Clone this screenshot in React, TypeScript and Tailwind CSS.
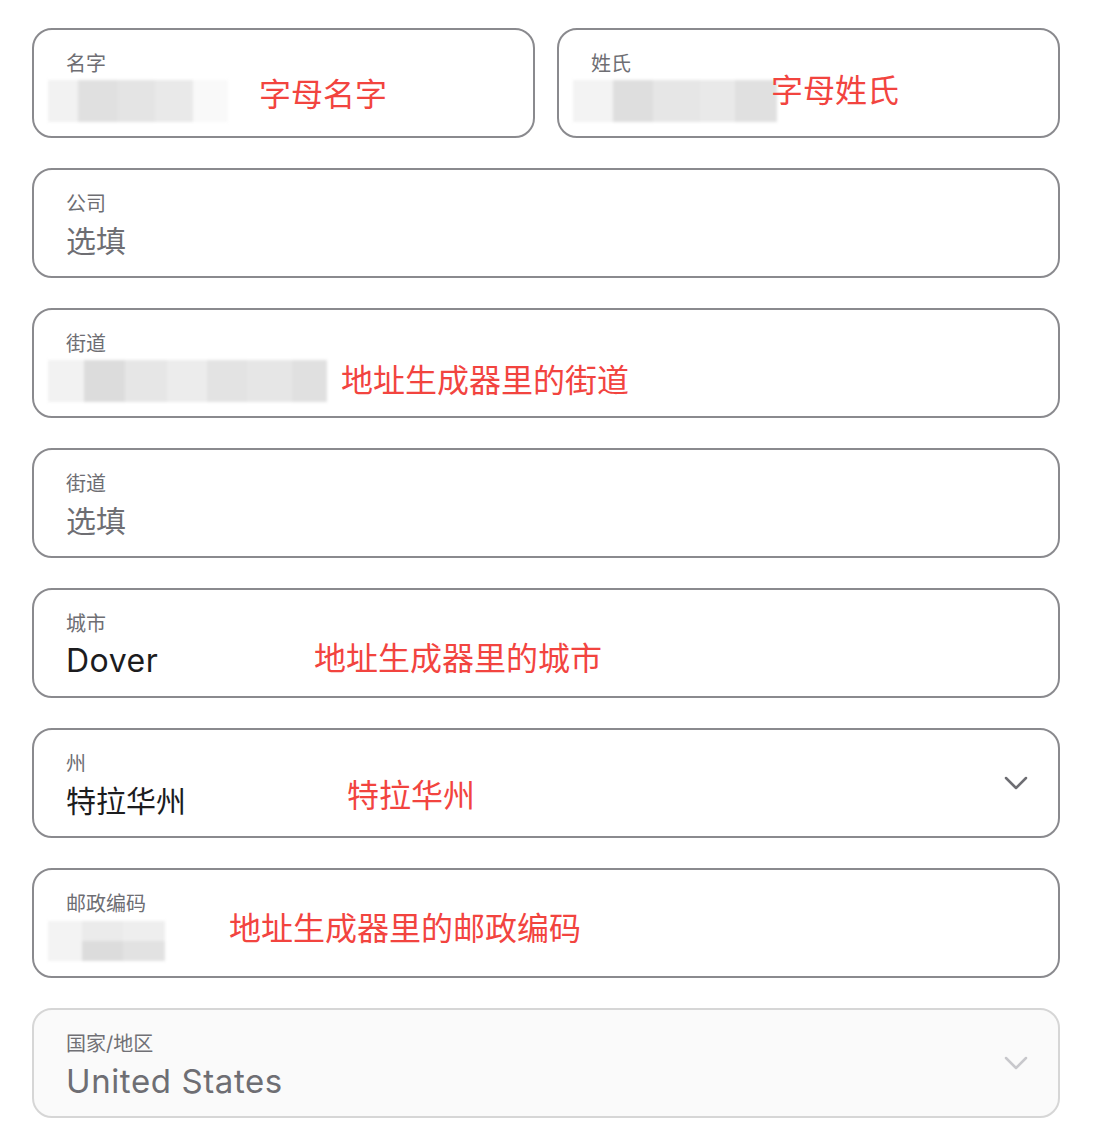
import { ChevronDown } from 'lucide-react';

type Blur = { w: number; top: string; bottom?: string };

const FONT = "font-['Inter','Noto_Sans_CJK_SC',sans-serif]";

const Redacted = ({ blocks, h = 42 }: { blocks: Blur[]; h?: number }) => (
  <div className="-ml-[18px] flex blur-[1.5px]" style={{ height: h }}>
    {blocks.map((b, i) => (
      <div key={i} className="flex flex-col" style={{ width: b.w }}>
        <div className="flex-1" style={{ background: b.top }} />
        <div className="flex-1" style={{ background: b.bottom ?? b.top }} />
      </div>
    ))}
  </div>
);

const Note = ({ text, left, top }: { text: string; left: number; top: number }) => (
  <span
    className="pointer-events-none absolute text-[32px] leading-none whitespace-nowrap text-[#f2443f]"
    style={{ left, top }}
  >
    {text}
  </span>
);

type FieldProps = {
  label: string;
  children?: React.ReactNode;
  select?: boolean;
  disabled?: boolean;
  className?: string;
};

const Field = ({ label, children, select, disabled, className }: FieldProps) => (
  <div
    className={`relative flex h-[110px] items-start rounded-[20px] border-2 px-[32px] pt-[22px] ${
      disabled ? 'border-[#d6d6d6] bg-[#fafafa]' : 'border-[#8a8a8e] bg-white'
    } ${className ?? ''}`}
  >
    <div className="flex flex-1 flex-col gap-[6px]">
      <p className={`text-[20px] leading-[24px] ${disabled ? 'text-[#707075]' : 'text-[#6e6e73]'}`}>{label}</p>
      <div className="flex h-[38px] items-center">{children}</div>
    </div>
    {select && (
      <ChevronDown
        className={`absolute right-[22px] top-1/2 h-[40px] w-[40px] -translate-y-1/2 ${
          disabled ? 'text-[#c8c8cc]' : 'text-[#6e6e73]'
        }`}
        strokeWidth={1.5}
      />
    )}
  </div>
);

const Value = ({ children, muted }: { children: React.ReactNode; muted?: boolean }) => (
  <span className={`text-[30px] leading-[38px] ${muted ? 'text-[#6e6e73]' : 'text-[#1c1c1e]'}`}>{children}</span>
);

export default function App() {
  return (
    <div className={`min-h-[1132px] bg-white pl-[32px] pt-[28px] ${FONT}`}>
      <div className="flex w-[1028px] flex-col gap-[30px]">
        <div className="grid grid-cols-2 gap-[22px]">
          <Field label="名字">
            <Redacted
              blocks={[
                { w: 30, top: '#f2f2f2' },
                { w: 40, top: '#e0e0e0' },
                { w: 37, top: '#e4e4e4' },
                { w: 38, top: '#e9e9e9' },
                { w: 35, top: '#f9f9f9' },
              ]}
            />
            <Note text="字母名字" left={225} top={49} />
          </Field>
          <Field label="姓氏">
            <Redacted
              blocks={[
                { w: 40, top: '#f3f3f3' },
                { w: 40, top: '#dedede' },
                { w: 47, top: '#e6e6e6' },
                { w: 35, top: '#e9e9e9' },
                { w: 42, top: '#e0e0e0' },
              ]}
            />
            <Note text="字母姓氏" left={212} top={45} />
          </Field>
        </div>
        <Field label="公司">
          <Value muted>选填</Value>
        </Field>
        <Field label="街道">
          <Redacted
            blocks={[
              { w: 36, top: '#f2f2f2' },
              { w: 41, top: '#dcdcdc' },
              { w: 42, top: '#e6e6e6' },
              { w: 40, top: '#ececec' },
              { w: 40, top: '#e3e3e3' },
              { w: 45, top: '#e6e6e6' },
              { w: 35, top: '#e0e0e0' },
            ]}
          />
          <Note text="地址生成器里的街道" left={307} top={55} />
        </Field>
        <Field label="街道">
          <Value muted>选填</Value>
        </Field>
        <Field label="城市">
          <span className="text-[32px] leading-[38px] tracking-[0.5px] text-[#1c1c1e]">Dover</span>
          <Note text="地址生成器里的城市" left={280} top={53} />
        </Field>
        <Field label="州" select>
          <Value>特拉华州</Value>
          <Note text="特拉华州" left={313} top={50} />
        </Field>
        <Field label="邮政编码">
          <Redacted
            h={40}
            blocks={[
              { w: 34, top: '#f3f3f3' },
              { w: 41, top: '#ebebeb', bottom: '#dcdcdc' },
              { w: 42, top: '#eeeeee', bottom: '#e2e2e2' },
            ]}
          />
          <Note text="地址生成器里的邮政编码" left={195} top={43} />
        </Field>
        <Field label="国家/地区" select disabled>
          <span className="text-[33px] leading-[38px] tracking-[0.6px] text-[#6e6e73]">United States</span>
        </Field>
      </div>
    </div>
  );
}
